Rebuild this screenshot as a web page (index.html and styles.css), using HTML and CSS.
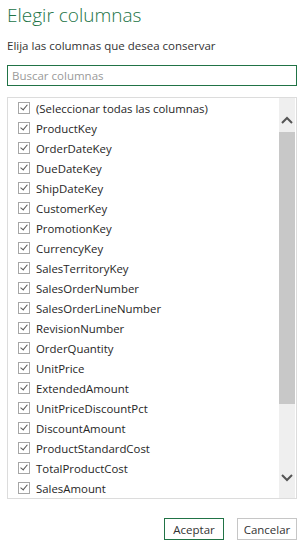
FILE: index.html
```html
<!DOCTYPE html>
<html lang="es">
<head>
<meta charset="UTF-8">
<meta name="viewport" content="width=device-width, initial-scale=1.0">
<title>Elegir columnas</title>
<link rel="stylesheet" href="styles.css">
</head>
<body>
  <div id="dialog">
    <h1 class="title">Elegir columnas</h1>
    <p class="subtitle">Elija las columnas que desea conservar</p>
    <input class="search" type="text" placeholder="Buscar columnas">

    <div class="listbox">
      <ul class="columns">
        <li><span class="check"></span>(Seleccionar todas las columnas)</li>
        <li><span class="check"></span>ProductKey</li>
        <li><span class="check"></span>OrderDateKey</li>
        <li><span class="check"></span>DueDateKey</li>
        <li><span class="check"></span>ShipDateKey</li>
        <li><span class="check"></span>CustomerKey</li>
        <li><span class="check"></span>PromotionKey</li>
        <li><span class="check"></span>CurrencyKey</li>
        <li><span class="check"></span>SalesTerritoryKey</li>
        <li><span class="check"></span>SalesOrderNumber</li>
        <li><span class="check"></span>SalesOrderLineNumber</li>
        <li><span class="check"></span>RevisionNumber</li>
        <li><span class="check"></span>OrderQuantity</li>
        <li><span class="check"></span>UnitPrice</li>
        <li><span class="check"></span>ExtendedAmount</li>
        <li><span class="check"></span>UnitPriceDiscountPct</li>
        <li><span class="check"></span>DiscountAmount</li>
        <li><span class="check"></span>ProductStandardCost</li>
        <li><span class="check"></span>TotalProductCost</li>
        <li><span class="check"></span>SalesAmount</li>
      </ul>
      <div class="scrollbar">
        <div class="arrow up">
          <svg width="12" height="8" viewBox="0 0 12 8"><path d="M1 7 L6 2 L11 7" fill="none" stroke="#555" stroke-width="2"/></svg>
        </div>
        <div class="track"><div class="thumb"></div></div>
        <div class="arrow down">
          <svg width="12" height="8" viewBox="0 0 12 8"><path d="M1 1 L6 6 L11 1" fill="none" stroke="#555" stroke-width="2"/></svg>
        </div>
      </div>
    </div>

    <div class="actions">
      <button class="btn primary">Aceptar</button>
      <button class="btn">Cancelar</button>
    </div>
  </div>
</body>
</html>
```

FILE: styles.css
```css
body {
  font-family: "Open Sans", "Noto Sans", sans-serif;
  margin: 0;
  padding: 0;
  background: #fff;
  color: #333;
}

#dialog {
  width: 290px;
  padding: 0 11px 0 7px;
}

.title {
  margin: 0;
  padding-top: 2px;
  font-size: 19px;
  font-weight: 300;
  line-height: 26px;
  color: #217346;
}

.subtitle {
  margin: 9px 0 0;
  font-size: 11.5px;
  line-height: 17px;
  color: #333;
}

.search {
  display: block;
  box-sizing: border-box;
  width: 290px;
  height: 21px;
  margin-top: 11px;
  padding: 0 4px;
  border: 1px solid #217346;
  font-family: inherit;
  font-size: 11.5px;
  color: #333;
  outline: none;
}

.search::placeholder {
  color: #9a9a9a;
}

.listbox {
  display: flex;
  box-sizing: border-box;
  width: 290px;
  height: 402px;
  margin-top: 11px;
  border: 1px solid #dcdcdc;
}

.columns {
  flex: 1;
  list-style: none;
  margin: 0;
  padding: 0 0 0 10px;
}

.columns li {
  display: flex;
  align-items: center;
  height: 20px;
  font-size: 11.4px;
  color: #262626;
  white-space: nowrap;
}

.check {
  position: relative;
  box-sizing: border-box;
  width: 12px;
  height: 12px;
  margin-right: 6px;
  border: 1px solid #a6a6a6;
  background: #fff;
}

.check::after {
  content: "";
  position: absolute;
  left: 3px;
  top: 0px;
  width: 3px;
  height: 6px;
  border: solid #555;
  border-width: 0 1.5px 1.5px 0;
  transform: rotate(40deg);
}

.scrollbar {
  display: flex;
  flex-direction: column;
  width: 16px;
  margin-right: 1px;
  background: #efefef;
}

.arrow {
  display: flex;
  justify-content: center;
  height: 34px;
}

.arrow.up {
  align-items: flex-end;
  padding-bottom: 8px;
  box-sizing: border-box;
}

.arrow.down {
  align-items: flex-start;
  padding-top: 10px;
  box-sizing: border-box;
}

.track {
  flex: 1;
}

.thumb {
  height: 272px;
  background: #c8c8c8;
}

.actions {
  display: flex;
  justify-content: flex-end;
  gap: 13px;
  margin-top: 19px;
}

.btn {
  box-sizing: border-box;
  width: 60px;
  height: 22px;
  padding: 0;
  border: 1px solid #c6c6c6;
  background: #fff;
  font-family: inherit;
  font-size: 11.5px;
  color: #333;
}

.btn.primary {
  border-color: #217346;
}
```
